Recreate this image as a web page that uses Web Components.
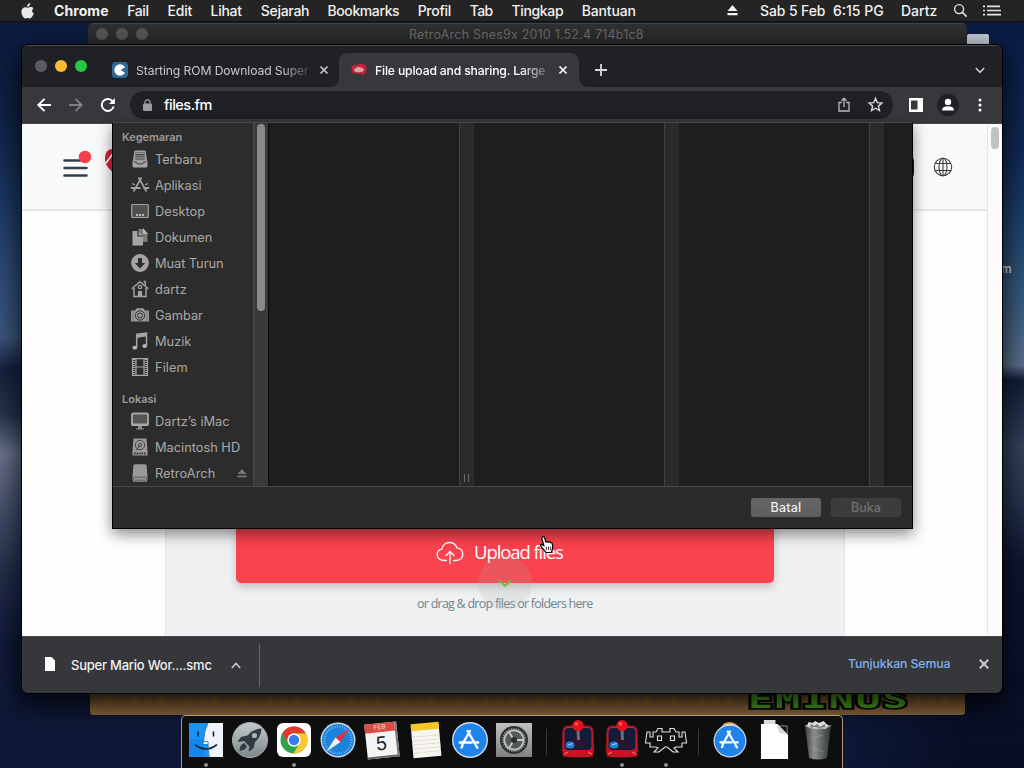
<!DOCTYPE html>
<html lang="ms">
<head>
<meta charset="utf-8">
<title>Desktop</title>
<style>
html,body{margin:0;width:1024px;height:768px;overflow:hidden;background:#0c1730;font-family:Inter,Roboto,sans-serif}
</style>
</head>
<body>
<mac-desktop></mac-desktop>
<script>
const define = (name, html, after) => customElements.define(name, class extends HTMLElement {
  connectedCallback() {
    if (this.shadowRoot) return;
    const root = this.attachShadow({ mode: 'open' });
    const t = document.createElement('template');
    t.innerHTML = typeof html === 'function' ? html(this) : html;
    root.appendChild(t.content.cloneNode(true));
    if (after) after(this, root);
  }
});

/* A single line of text, tracked so that it fills the width in its "w" attribute. */
define('fit-text', '<style>:host{display:inline-block;white-space:nowrap;flex:none}span{display:inline-block;white-space:pre}</style><span><slot></slot></span>', (el, root) => {
  const w = +el.getAttribute('w'), s = root.querySelector('span'), n = el.textContent.length;
  const nat = s.offsetWidth;
  el.style.width = w + 'px';
  if (nat) s.style.letterSpacing = ((w - nat) / n).toFixed(3) + 'px';
});

const appstoreA = '<path d="M17 8.500 9.700 21.200M14.800 8.500 21.500 20.200" stroke="#fff" stroke-width="2.300" stroke-linecap="round"/><path d="M7.300 19.300h11.300M22.500 19.300h2.200M9 24l.9-1.500M22.500 22l1.500 2.400" stroke="#fff" stroke-width="2.300" stroke-linecap="round"/>';
const joystick = '<path d="M1.500 10Q1.500 3.500 7 3.500h20q5.500 0 5.500 6.500l.8 19H.7z" fill="#a3141f"/><rect x="3" y="5.500" width="28" height="23" rx="4" fill="#161b3a" stroke="#c2263a"/><path d="m5 24 11-12 13 14H7z" fill="#2a1630"/><path d="M1 28h32l-1 6.500q-15 2-30 0z" fill="#c81420"/><path d="m3 32 4-2m24 2-4-2" stroke="#ff7a80"/><path d="m17 8 .5 10" stroke="#68707a" stroke-width="3"/><circle cx="17" cy="3.500" r="5.500" fill="#e8101c"/><circle cx="15.500" cy="2" r="1.800" fill="#ff5660"/><ellipse cx="9" cy="23" rx="4.400" ry="3.600" fill="#2a7fd0"/><path d="m7 23 4.500-1.500" stroke="#9fd0ff"/>';
const ICONS = {
  apple: ['0 0 14 16', '<path fill="#e8e8e8" d="M9.300 0c.1 1-.3 2-.9 2.700-.6.700-1.500 1.200-2.400 1.100C5.900 2.900 6.400 1.900 7 1.300 7.600.6 8.600.1 9.300 0zM12.400 5.400c-1.900 1.200-1.600 4 .5 4.900-.4 1.200-1 2.400-1.800 3.500-.6.800-1.300 1.600-2.200 1.600-.9 0-1.200-.5-2.300-.5s-1.400.5-2.200.5C3.400 15.500 2.600 14.600 2 13.800.2 11.200-.1 8.100 1 6.200c.8-1.300 2-2 3.200-2 1.200 0 1.900.6 2.900.6.900 0 1.500-.7 3-.7.900 0 1.700.5 2.300 1.300z"/>'],
  eject: ['0 0 12 11', '<path fill="currentColor" d="M6 0l5.500 6H.5zM.5 8h11v2.200H.5z"/>'],
  search: ['0 0 16 16', '<circle cx="6.500" cy="6.500" r="4.800" stroke="#e4e4e4" stroke-width="1.500"/><path d="m10 10 4.500 4.500" stroke="#e4e4e4" stroke-width="1.700"/>'],
  list: ['0 0 18 12', '<path d="M0 1.500h2M0 6h2M0 10.500h2M4 1.500h13M4 6h14M4 10.500h14" stroke="#e4e4e4" stroke-width="1.900"/>'],
  romtab: ['0 0 16 16', '<rect width="16" height="16" rx="4" fill="#2f6a96"/><circle cx="8" cy="8" r="5.700" fill="#fff"/><path d="m8.500 8 6-3.500v7z" fill="#2f6a96"/>'],
  filetab: ['0 0 16 16', '<path d="M.5 3 6 2l4-1.500 5 2q1.500 5-1 9l-2.500 3L10 12H2Q0 8 .5 3z" fill="#c92036"/><path d="M3 8q0-2 2-2.300Q7 3 9.500 5q3.500.5 3.500 3-1 2.500-4 2.500H6Q3.500 10.500 3 8z" fill="#d3a3a5"/>'],
  x: ['0 0 10 10', '<path d="m1.500 1.500 7 7m0-7-7 7" stroke="currentColor" stroke-width="1.700"/>'],
  plus: ['0 0 12 12', '<path d="M6 0v12M0 6h12" stroke="#d8dadc" stroke-width="1.800"/>'],
  down: ['0 0 10 7', '<path d="m.8 1 4.200 4.300L9.200 1" stroke="#c8cacc" stroke-width="1.600"/>'],
  up: ['0 0 10 7', '<path d="M.8 6 5 1.500 9.200 6" stroke="#c8cacc" stroke-width="1.600"/>'],
  back: ['0 0 14 14', '<path d="M7.500.8 1.300 7l6.200 6.200M1.300 7H14" stroke="#fff" stroke-width="1.900"/>'],
  fwd: ['0 0 14 14', '<path d="M6.500.8 12.700 7l-6.200 6.200M12.700 7H0" stroke="#7d7f83" stroke-width="1.800"/>'],
  reload: ['0 0 14 14', '<path d="M12.600 8.500A6 6 0 1 1 11 2.700L12.800 4.500" stroke="#fff" stroke-width="1.900"/><path d="M13.900 0v6H8z" fill="#fff"/>'],
  lock: ['0 0 9 12', '<rect y="4.500" width="9" height="7.500" rx="1.200" fill="#9a9ca0"/><path d="M2 5V3.300a2.500 2.500 0 0 1 5 0V5" stroke="#9a9ca0" stroke-width="1.200"/>'],
  share: ['0 0 12 15', '<path d="M3.800 5.500H1v8.500h10V5.500H8.200M6 10V1.500M3.500 3.700 6 1.200l2.500 2.500" stroke="#b8babd" stroke-width="1.300"/>'],
  star: ['0 0 14 14', '<path d="m7 1.300 1.700 4 4.300.4-3.300 2.800 1 4.200L7 10.500l-3.700 2.200 1-4.200L1 5.700l4.300-.4z" stroke="#d4d6d8" stroke-width="1.300"/>'],
  panel: ['0 0 14 14', '<path fill="#fff" fill-rule="evenodd" d="M0 0h14v14H0zM2 2.500v9h6.500v-9z"/>'],
  person: ['0 0 22 22', '<circle cx="11" cy="11" r="11" fill="#1f2023"/><circle cx="11" cy="8" r="3.200" fill="#fff"/><path fill="#fff" d="M5 16.500q0-4.300 6-4.300t6 4.300z"/>'],
  dots: ['0 0 4 14', '<circle cx="2" cy="2" r="1.500" fill="#fff"/><circle cx="2" cy="7" r="1.500" fill="#fff"/><circle cx="2" cy="12" r="1.500" fill="#fff"/>'],
  burger: ['0 0 28 28', '<path d="M1.500 10.500h22M1.500 18h22M1.500 25.500h22" stroke="#33414e" stroke-width="2.600" stroke-linecap="round"/><circle cx="22" cy="7" r="6.200" fill="#fb3c49"/>'],
  brand: ['0 0 24 26', '<path d="M12 26C4 21 0 16 0 9q0-9 8-9l16 1v20z" fill="#d61f38"/><path d="M1 14 7 6l4 9" stroke="#fff" stroke-width="1.700"/>'],
  globe: ['0 0 20 20', '<g stroke="#3b3c3e" stroke-width="1.100"><circle cx="10" cy="10" r="8.700"/><ellipse cx="10" cy="10" rx="4" ry="8.700"/><path d="M10 1v18M2.200 6.500h15.600M2.200 13.500h15.600"/></g>'],
  cloud: ['0 0 28 24', '<g stroke="#fff" stroke-width="1.300" stroke-linecap="round"><path d="M10.500 19.500H8.200C4 19.500 1.200 16.800 1.200 13.500c0-3 2.100-4.800 4.600-5.300C6.500 4 9.800 1.500 13.600 1.500c3.500 0 6.200 2 7.300 5.300 3.400.3 5.900 2.800 5.900 6.200 0 3.600-2.800 6.500-6.600 6.500h-2.700"/><path d="M14 22.500V10.500m-4 4 4-4 4 4"/></g>'],
  hand: ['0 0 16 18', '<path d="M3.300 1c1-.7 2 0 2.300.9l1.300 4.200 1-.7 1.400.8 1.400-.3 1 .9 1.300.2.800 2.800-.2 3.200-1.500 3.500H7L2.800 11.300l-1.300-2c.4-1.300 1.500-1.300 2.600 0l.8.3L2.900 3z" fill="#fff" stroke="#000" stroke-width="1.200"/><path d="M7.300 10.500v3.500m2.200-3.500V14m2.200-3.500V14" stroke="#000" stroke-width=".8"/>'],
  chev: ['0 0 16 10', '<path d="m1 1.500 7 6 7-6" stroke="#74b83c" stroke-width="2.200"/>'],
  file: ['0 0 10 14', '<path d="M0 0h6.500L10 3.500V14H0z" fill="#fff"/>'],
  terbaru: ['0 0 18 18', '<path fill="#a4a4a4" d="M3.500.5h11l1.500 10 .5 1v5l-1 1h-13l-1-1v-5l.5-1z"/><path d="M4.500 2.500h9v8h-9z" fill="#3a3a3a"/><path d="M4.500 3.500h9M4.500 5.700h9M4.500 7.900h9M4.500 10.100h9" stroke="#a4a4a4" stroke-width="1.100"/><path d="M2.500 12h3l1 2h5l1-2h3" stroke="#3a3a3a"/>'],
  aplikasi: ['0 0 18 18', '<g stroke="#a4a4a4" stroke-width="1.600"><path d="M10.500 1.500 2.500 15.500M7.500 1.500l8 14"/><path d="M0 12h9.500M12.500 12H18" stroke-width="1.800"/><path d="m1 7.500 3 1.500M17 7.500 14 9" stroke-width="1.300"/></g>'],
  desktop: ['0 0 18 18', '<rect x=".7" y="2.500" width="16.600" height="13" rx="1" fill="#505050" stroke="#a4a4a4" stroke-width="1.200"/><path d="M5 13h2m1 0h2m1 0h2" stroke="#ddd" stroke-width="1.600"/>'],
  dokumen: ['0 0 18 18', '<path d="M7.500 1H12l4.500 4.500V14h-9z" fill="#7b7b7b"/><path d="M12 0v6h5z" fill="#b5b5b5"/><path d="M1.500 3H7l5 5v9.500H1.500z" fill="#a4a4a4"/><path d="M7 3v5h5" stroke="#2c2c2c" stroke-width="1.200"/>'],
  turun: ['0 0 18 18', '<circle cx="9" cy="9" r="8.900" fill="#a4a4a4"/><path d="M7 4h4v5h3.200L9 14.500 3.800 9H7z" fill="#2c2c2c"/>'],
  rumah: ['0 0 18 18', '<path d="m.8 8.700 8.200-7 8.200 7M3 8v8.500h12V8M12.500 1.500h1.800V5" stroke="#a4a4a4" stroke-width="1.500"/><circle cx="9" cy="7" r="1.700" stroke="#a4a4a4" stroke-width="1.200"/><path d="M7 11h4v5.500H7z" fill="#a4a4a4"/>'],
  gambar: ['0 0 18 18', '<path fill="#9a9a9a" d="M0 4.500h4l1.500-2.300h7L14 4.500h4v11H0z"/><circle cx="9" cy="9.500" r="4.700" stroke="#303030"/><circle cx="9" cy="9.500" r="2.500" stroke="#303030"/><path d="M2 4v11M16 4v11" stroke="#777"/>'],
  muzik: ['0 0 18 18', '<path d="M5.700 15.500V2.500L15.500 1v12.500" stroke="#a4a4a4" stroke-width="1.500"/><path d="M5.500 2 16 .5v3.700L5.500 6z" fill="#a4a4a4"/><ellipse cx="3.800" cy="15.700" rx="2.400" ry="1.900" fill="#b4b4b4"/><ellipse cx="13.700" cy="14" rx="2.400" ry="1.900" fill="#b4b4b4"/>'],
  filem: ['0 0 18 18', '<path d="M1.500.7h15v16.600h-15zM5 1v16M13 1v16M5 9h8" stroke="#a4a4a4" stroke-width="1.200"/><path d="M3.200 1v16M14.800 1v16" stroke="#a4a4a4" stroke-width="2.600" stroke-dasharray="1 1"/>'],
  imac: ['0 0 18 18', '<rect x="1" y="1.500" width="16" height="11.500" rx="1" fill="#555" stroke="#a8a8a8" stroke-width="1.800"/><path d="M1 12.500h16" stroke="#a8a8a8" stroke-width="2"/><path d="M7 14h4v2.500h2v1H5v-1h2z" fill="#8a8a8a"/>'],
  hd: ['0 0 18 18', '<path d="M2.500.5h13l1 12v5h-15v-5z" fill="#9a9a9a"/><circle cx="9" cy="7" r="4.700" stroke="#404040" stroke-width=".9"/><circle cx="9" cy="7" r="1.700" stroke="#404040" stroke-width=".8"/><path d="m9 7-4 5.500" stroke="#404040"/><path d="M3 15.500h12" stroke="#303030" stroke-width="1.800" stroke-dasharray="1.500 1"/>'],
  drive: ['0 0 18 18', '<path d="M1.500 14 2.300 2Q2.500.3 4 .3h10q1.500 0 1.700 1.700l.8 12v1.700q0 2-2 2h-11q-2 0-2-2z" fill="#989898"/><path d="M2.500 14.200q0-1 1-1h11q1 0 1 1v1q0 1-1 1h-11q-1 0-1-1z" stroke="#555" stroke-width=".9"/>'],
  finder: ['0 0 34 34', '<path fill="#1b93f2" d="M0 0h34v34H0z"/><path fill="#0f7be0" d="M0 16h15v18H0z" opacity=".5"/><path fill="#eef3fa" d="M19 0h15v34H20q-1-6-1-13h-4.500Q15 8 19 0z"/><path d="M9 9v4M24.500 9v4M6.500 22q10.500 8 21 0" stroke="#14273e" stroke-width="1.600" stroke-linecap="round"/><path d="M19 0q-4 8-4.500 18.500H19Q19 28 20.500 34" stroke="#2b6aa8" stroke-width=".8"/>'],
  rocket: ['0 0 36 36', '<defs><linearGradient id="g" x2="0" y2="1"><stop stop-color="#c3c9cb"/><stop offset="1" stop-color="#7c8688"/></linearGradient></defs><circle cx="18" cy="18" r="17.500" fill="url(#g)" stroke="#a9afb1"/><path fill="#2f3b40" d="M29.500 6.500Q21 7 15.500 13.500L9 15q-2.500 3-3 5l6-1 5.500 5.500-1 5q3-1 5-3.500l1.500-6q6-5 6.500-13.500zM12 21q-4 1-4.500 8 6-1 7.500-4.500z"/><circle cx="22.500" cy="13.500" r="2.600" fill="#aab2b5"/>'],
  chrome: ['0 0 34 34', '<rect width="34" height="34" rx="6" fill="#fff"/><circle cx="17" cy="17" r="13.500" fill="#2ba24c"/><path fill="#fcc82d" d="M28.800 10.300A13.500 13.500 0 0 1 16.500 30.500L22.500 20 20 10.300z"/><path fill="#e2392c" d="M5.300 10.200A13.500 13.500 0 0 1 28.700 10.300H17L11 20.200z"/><circle cx="17" cy="17" r="6.700" fill="#fff"/><circle cx="17" cy="17" r="5.200" fill="#3d7cf0"/>'],
  safari: ['0 0 36 36', '<circle cx="18" cy="18" r="17.500" fill="#c9d5de"/><circle cx="18" cy="18" r="16" fill="#1b83dc"/><circle cx="18" cy="18" r="13.500" stroke="#8bc8f4" stroke-width="2.200" stroke-dasharray=".7 1.700"/><path fill="#ea2c3b" d="m29.500 6.500-14 9.500 4.500 4.500z"/><path fill="#f4f4f4" d="m6.500 29.500 14-9.500-5-4.500z"/>'],
  pages: ['0 0 34 36', '<g transform="rotate(-5 17 18)"><path fill="#f7f5ef" d="M3 3h28v32H3z"/><path fill="#f4c62c" d="M3 1h28v7H3z"/><path d="M3 14h28M3 18h28M3 22h28M3 26h28M3 30h28" stroke="#d8d5cc" stroke-width=".7"/></g>'],
  appstore: ['0 0 34 34', '<circle cx="17" cy="17" r="17" fill="#c8dcec"/><circle cx="17" cy="17" r="15.700" fill="#1f83ea"/>' + appstoreA],
  appstore2: ['0 0 34 34', '<circle cx="17" cy="12" r="12" fill="#e8e2d0"/><path d="M10 2q8-5 14 1" stroke="#e8933a" stroke-width="1.500"/><circle cx="17" cy="18" r="16.500" fill="#c8dcec"/><circle cx="17" cy="18" r="15.300" fill="#1f83ea"/>' + appstoreA],
  prefs: ['0 0 36 34', '<defs><linearGradient id="p" x2="0" y2="1"><stop stop-color="#bfc1c2"/><stop offset="1" stop-color="#7e8182"/></linearGradient></defs><path fill="url(#p)" d="M0 0h36v34H0z"/><circle cx="18" cy="17" r="13" fill="#9a9d9e" stroke="#333" stroke-width="2"/><circle cx="18" cy="17" r="12" stroke="#2e3031" stroke-width="2.500" stroke-dasharray="1.500 1.200"/><circle cx="18" cy="17" r="9.500" fill="#55585a" stroke="#c0c2c3" stroke-width="1.500"/><path d="M18 17h9M18 17l-5-8M18 17l-5 8" stroke="#c5c7c8" stroke-width="2"/><circle cx="18" cy="17" r="3" fill="#2a2c2d"/>'],
  joystick: ['0 0 34 36', joystick],
  retro: ['0 0 42 26', '<path d="M13 1.500h4v3.500h8V1.500h4l2 3.500h3v5h3V5h3l1.500 11H37v4h-6l-2 1 4 4h-5l-6-5h-2l-6 5H9l4-4-2-1H5v-4H.5L2 5h3v5h3V5h3z" fill="#101010" stroke="#e2e2e2" stroke-width="1.100"/><path d="M12.500 9h4v4.500h-4zM25.500 9h4v4.500h-4z" stroke="#e2e2e2" stroke-width="1.100"/>'],
  docs: ['0 0 30 40', '<path fill="#dcdcdc" d="M4 0h12v5H4z"/><path fill="#fff" d="M1 4h17l11 11v24H1z"/><path fill="#d8d8d8" d="M18 4q0 7 3 9l8 2z"/><path d="M18 6h10v9" stroke="#c9c9c9" stroke-width=".7"/>'],
  trash: ['0 0 32 40', '<defs><linearGradient id="t"><stop stop-color="#3a3d3e"/><stop offset=".35" stop-color="#8b8f90"/><stop offset="1" stop-color="#2f3233"/></linearGradient></defs><path fill="url(#t)" d="M2 5h28l-4.500 33Q16 41 6.500 38z"/><path fill="#ddd" d="m4 6 2-4 4 1 3-2 4 2 5-2 3 3 3 2-4 3-6-1-5 1-5-1z"/><path fill="#777" d="m8 4 4 2 3-2 3 3 5-3 1 3-6 1-6-1-4 1z"/><path d="M2 5.500q14 7 28 0" stroke="#aaa"/><path d="m8 18 14-3M9 27l13 5" stroke="#a8abac" opacity=".4"/>']
};
define('ui-icon', el => {
  const [box, body] = ICONS[el.getAttribute('name')];
  return `<style>:host{display:block;flex:none;width:${el.getAttribute('w')}px;height:${el.getAttribute('h') || el.getAttribute('w')}px}svg{display:block;width:100%;height:100%;overflow:visible}</style><svg viewBox="${box}" fill="none" preserveAspectRatio="none">${body}</svg>`;
});

define('menu-bar', () => `
<style>
:host{display:flex;align-items:center;height:22px;box-sizing:border-box;padding:0 23px 0 21px;background:#242425;border-bottom:1px solid #111;color:#f2f2f2;font-size:14px;font-weight:500;line-height:22px}
nav{display:flex;gap:18.700px;margin-left:19px}
b{font-weight:700}
.r{display:flex;align-items:center;margin-left:auto}
</style>
<ui-icon name="apple" w="14" h="16"></ui-icon>
<nav><fit-text w="54.500"><b>Chrome</b></fit-text>${[['Fail', 21.500], ['Edit', 24.500], ['Lihat', 31.500], ['Sejarah', 48], ['Bookmarks', 71.500], ['Profil', 33.500], ['Tab', 23], ['Tingkap', 51.500], ['Bantuan', 54]].map(([t, w]) => `<fit-text w="${w}">${t}</fit-text>`).join('')}</nav>
<div class="r"><ui-icon name="eject" w="11" h="11"></ui-icon>
<fit-text w="65" style="margin-left:22px">Sab 5 Feb</fit-text><fit-text w="51" style="margin-left:8px">6:15 PG</fit-text>
<fit-text w="36" style="margin-left:17px">Dartz</fit-text><ui-icon name="search" w="15" style="margin-left:16px"></ui-icon><ui-icon name="list" w="18" h="11" style="margin-left:15px"></ui-icon></div>`);

define('retro-window', `
<style>
:host{display:flex;flex-direction:column;border-radius:5px 5px 3px 3px;overflow:hidden}
header{display:flex;align-items:center;height:20px;padding-left:8px;gap:8px;color:#6b6b6b;font-size:12.500px;border-top:1px solid #444;background:linear-gradient(#303030,#292929)}
i{width:12px;height:12px;border-radius:50%;background:#565656}
.title{margin-left:253px}
.game{margin:auto 2px 0;height:24px;display:flex;border-radius:0 0 3px 3px;overflow:hidden;background:repeating-linear-gradient(90deg,#a87c0033 0 7px,transparent 7px 15px,#9b7a1d22 15px 21px,transparent 21px 27px) 14px 6px/100% 8px no-repeat,linear-gradient(#60472a,#86633a 60%,#8b693e)}
.word{margin:-1px 0 0 658px;height:20px;font:bold 24px/20px "DejaVu Sans Mono",monospace;color:#4fa51c;-webkit-text-stroke:3.500px #050805;paint-order:stroke fill;transform:scaleX(1.740);transform-origin:0 0}
</style>
<header><i></i><i></i><i></i><fit-text class="title" w="236">RetroArch Snes9x 2010 1.52.4 714b1c8</fit-text></header>
<div class="game"><fit-text class="word" w="93">EMINUS</fit-text></div>`);

define('tab-strip', `
<style>
:host{display:flex;height:41px;background:#202124;font-size:12.200px;align-items:flex-end}
.lights{display:flex;gap:8px;padding:0 0 15px 13px}
.lights i{width:12px;height:12px;border-radius:50%}
.tab{display:flex;align-items:center;height:34px;box-sizing:border-box;color:#c6c8ca}
.a{margin-left:25px;width:227px}
.b{background:#37383b;color:#fff;width:240px;border-radius:8px 8px 0 0;padding-left:12px;position:relative;font-weight:500}
.b:after{content:"";position:absolute;right:-8px;bottom:0;width:8px;height:8px;background:radial-gradient(circle at 100% 0,transparent 7.500px,#37383b 8px)}
.b:before{content:"";position:absolute;left:-8px;bottom:0;width:8px;height:8px;background:radial-gradient(circle at 0 0,transparent 7.500px,#37383b 8px)}
.clip{overflow:hidden;margin-left:8px;flex:none;-webkit-mask:linear-gradient(90deg,#000 85%,#0003)}
</style>
<div class="lights"><i style="background:#5c5b60"></i><i style="background:#fdbc2e"></i><i style="background:#28c840"></i></div>
<div class="tab a"><ui-icon name="romtab" w="16"></ui-icon><div class="clip" style="width:172px"><fit-text w="172">Starting ROM Download Super</fit-text></div><ui-icon name="x" w="10" style="margin-left:11px"></ui-icon></div>
<div class="tab b"><ui-icon name="filetab" w="16" h="14"></ui-icon><div class="clip" style="width:172px"><fit-text w="170">File upload and sharing. Large</fit-text></div><ui-icon name="x" w="10" style="margin-left:11px"></ui-icon></div>
<ui-icon name="plus" w="12" style="margin:0 0 11px 16px"></ui-icon>
<ui-icon name="down" w="10" h="7" style="margin:0 17px 13px auto"></ui-icon>`);

define('tool-bar', `
<style>
:host{display:flex;align-items:center;height:37px;background:#37383b;padding:0 20px 1px 15px;box-sizing:border-box;border-bottom:1px solid #46474a}
.omni{display:flex;align-items:center;flex:none;width:763px;height:28px;margin-left:15px;border-radius:14px;background:#202124;box-sizing:border-box;padding:0 10px 0 13px;color:#fff;font-size:14.500px;font-weight:500}
</style>
<ui-icon name="back" w="14"></ui-icon><ui-icon name="fwd" w="14" style="margin-left:18px"></ui-icon><ui-icon name="reload" w="14" style="margin-left:18px"></ui-icon>
<div class="omni"><ui-icon name="lock" w="9" h="12"></ui-icon><fit-text w="48" style="margin-left:12px">files.fm</fit-text><ui-icon name="share" w="12" h="15" style="margin-left:auto"></ui-icon><ui-icon name="star" w="15" style="margin-left:18px"></ui-icon></div>
<ui-icon name="panel" w="14" style="margin-left:16px"></ui-icon><ui-icon name="person" w="22" style="margin-left:14px"></ui-icon><ui-icon name="dots" w="4" h="14" style="margin-left:auto"></ui-icon>`);

define('web-page', `
<style>
:host{display:flex;height:512px;background:#fefefe;overflow:hidden}
.main{flex:1;display:flex;flex-direction:column}
header{display:flex;align-items:center;height:87px;box-sizing:border-box;background:#f8f9f9;border-bottom:2px solid #e6e7e8;padding:0 34px 0 41px}
.drop{width:680px;box-sizing:border-box;border:solid #e2e5e8;border-width:0 1px;margin-left:143px;flex:1;background:#eff0f2;display:flex;flex-direction:column;align-items:center}
.btn{width:538px;height:103px;margin-top:269px;background:#fb424f;border-radius:5px;box-shadow:0 4px 8px #0003;display:flex;align-items:flex-end;box-sizing:border-box;padding:0 0 18px 200px;color:#fff;font:18.500px/26px "Open Sans",sans-serif}
p{margin:11px 0 0 -1px;color:#71838c;font:12.500px/20px "Open Sans",sans-serif}
.bar{width:15px;box-sizing:border-box;border-left:1px solid #e5e5e5;background:#fbfbfb;padding:3px 0 0 3px}
.bar i{display:block;width:8px;height:22px;border-radius:4px;background:#c1c2c3}
.pill{margin-left:auto;width:14px;height:26px;border-radius:7px;background:#222}
</style>
<div class="main"><header><ui-icon name="burger" w="28" style="margin-top:-5px"></ui-icon><ui-icon name="brand" w="24" h="26" style="margin:-10px 0 0 14px"></ui-icon><div class="pill"></div><ui-icon name="globe" w="20" style="margin-left:19px"></ui-icon></header>
<div class="drop"><div class="btn"><ui-icon name="cloud" w="28" h="24"></ui-icon><fit-text w="89" style="margin-left:10px">Upload files</fit-text></div><p><fit-text w="175">or drag &amp; drop files or folders here</fit-text></p></div></div>
<div class="bar"><i></i></div>`);

define('download-bar', `
<style>
:host{display:flex;align-items:center;flex:1;background:#36373a;border-top:1px solid #48494c;color:#f0f0f0;font-size:13px;padding:0 12px 0 23px}
.item{display:flex;align-items:center;width:214px;height:43px;border-right:1px solid #66676a;font-weight:500}
.all{margin:-3px 0 0 auto;width:128px;height:27px;line-height:26px;box-sizing:border-box;display:flex;justify-content:center;color:#84aff0;border:1px solid #323338;border-radius:4px;font-size:12.300px;font-weight:500}
</style>
<div class="item"><ui-icon name="file" w="10" h="14" style="margin-top:-3px"></ui-icon><fit-text w="141" style="margin-left:16px">Super Mario Wor....smc</fit-text><ui-icon name="up" w="10" h="7" style="margin-left:19px"></ui-icon></div>
<div class="all"><fit-text w="102">Tunjukkan Semua</fit-text></div><ui-icon name="x" w="12" style="margin:-2px 0 0 15px;color:#c8cacc"></ui-icon>`);

define('chrome-window', `
<style>:host{display:flex;flex-direction:column;border-radius:6px;overflow:hidden;box-shadow:0 0 0 1px #000,0 10px 26px 4px #000b;border-top:1px solid #4a4b4d;box-sizing:border-box}</style>
<tab-strip></tab-strip><tool-bar></tool-bar><web-page></web-page><download-bar></download-bar>`);

define('side-item', el => `
<style>:host{display:flex;align-items:center;height:26px;padding-left:18px;color:#a9a9a9;font-size:12.800px}.e{margin-left:21px;color:#777}</style>
<ui-icon name="${el.getAttribute('icon')}" w="18"></ui-icon><fit-text w="${el.getAttribute('w')}" style="margin-left:6px">${el.getAttribute('label')}</fit-text>${el.hasAttribute('eject') ? '<ui-icon class="e" name="eject" w="10" h="9"></ui-icon>' : ''}`);

const item = (icon, label, w, extra = '') => `<side-item icon="${icon}" label="${label}" w="${w}" ${extra}></side-item>`;
define('open-dialog', `
<style>
:host{display:flex;flex-direction:column;box-sizing:border-box;border:1px solid #000;border-top:1px solid #484848;background:#2b2b2b;box-shadow:0 5px 14px #0007}
.body{display:flex;height:363px;border-bottom:1px solid #4a4a4a;background:#1e1e1e}
.side{width:140px;background:#2c2c2c;overflow:hidden;flex:none}
h4{margin:0;padding-left:9px;font-size:11px;line-height:14px;font-weight:600;color:#9b9b9b}
.scroll{width:15px;box-sizing:border-box;background:#3a3a3a;border-left:1px solid #4a4a4a;padding:1px 0 0 3px}
.scroll i{display:block;width:8px;height:187px;border-radius:4px;background:#8a8a8a}
.col{width:190px;box-sizing:border-box;background:#1e1e1e}
.col.first{width:191px;border-left:1px solid #0c0c0c}
.gap{width:15px;box-sizing:border-box;border-left:1px solid #424242;background:#2b2b2b;display:flex;align-items:flex-end;padding:0 0 4px 4px;gap:3px}
.gap s{width:1px;height:8px;background:#666}
footer{flex:1;display:flex;justify-content:flex-end;align-items:center;gap:10px;padding-right:11px}
button{all:unset;width:70px;height:19px;border-radius:3px;background:linear-gradient(#666,#5e5e5e);color:#eee;font:500 12.500px/19px Inter,sans-serif;display:flex;justify-content:center}
button:disabled{background:#3c3c3c;color:#707070}
</style>
<div class="body"><div class="side"><h4 style="margin-top:7px;margin-bottom:2px"><fit-text w="60.500">Kegemaran</fit-text></h4>
${item('terbaru', 'Terbaru', 46.500)}${item('aplikasi', 'Aplikasi', 46.500)}${item('desktop', 'Desktop', 50)}${item('dokumen', 'Dokumen', 57.500)}${item('turun', 'Muat Turun', 68.500)}${item('rumah', 'dartz', 31.500)}${item('gambar', 'Gambar', 48)}${item('muzik', 'Muzik', 36)}${item('filem', 'Filem', 32.500)}
<h4 style="margin:12px 0 2px"><fit-text w="34">Lokasi</fit-text></h4>
${item('imac', 'Dartz’s iMac', 75)}${item('hd', 'Macintosh HD', 85)}${item('drive', 'RetroArch', 60.500, 'eject')}</div>
<div class="scroll"><i></i></div><div class="col first"></div><div class="gap"><s></s><s></s></div><div class="col"></div><div class="gap"></div><div class="col"></div><div class="gap"></div></div>
<footer><button><fit-text w="31">Batal</fit-text></button><button disabled><fit-text w="30">Buka</fit-text></button></footer>`);

define('dock-cell', el => `
<style>:host{display:flex;width:44px;height:52px;flex-direction:column;align-items:center}.i{height:48px;display:flex;align-items:center}i{width:4px;height:4px;margin-top:-1px;border-radius:50%;background:${el.hasAttribute('on') ? '#8f9092' : 'transparent'}}</style><div class="i"><slot></slot></div><i></i>`);
define('cal-icon', `
<style>:host{display:flex;flex-direction:column;width:30px;height:33px;background:#f4f4f4;transform:rotate(-6deg);border-right:2px solid #777;border-bottom:2px solid #666;text-align:center;color:#222}
b{height:9px;background:#dc4b45;color:#f6c4bf;font:500 6.500px/9px Inter,sans-serif}span{font:19px/24px Inter,sans-serif}</style><b>FEB</b><span>5</span>`);

const cell = (n, w, h, on) => `<dock-cell ${on ? 'on' : ''}><ui-icon name="${n}" w="${w}" h="${h || w}"></ui-icon></dock-cell>`;
define('mac-dock', `
<style>:host{display:flex;box-sizing:border-box;padding:0 2px;background:#0e0e0f;border:1px solid #b29a78;border-bottom:0;border-radius:5px 5px 0 0}
hr{border:0;margin:13px 9px 0 10px;width:1px;flex:none;height:26px;background:#3c3c3c}dock-cell{flex:none}</style>
${cell('finder', 34, 34, 1)}${cell('rocket', 36)}${cell('chrome', 34, 34, 1)}${cell('safari', 36)}<dock-cell><cal-icon></cal-icon></dock-cell>${cell('pages', 34, 36)}${cell('appstore', 36)}${cell('prefs', 36, 34)}<hr>${cell('joystick', 34, 36)}${cell('joystick', 34, 36, 1)}${cell('retro', 42, 26, 1)}<hr>${cell('appstore2', 34)}${cell('docs', 29, 40)}${cell('trash', 30, 40)}`);

define('mac-desktop', `
<style>
:host{display:block;position:relative;width:1024px;height:768px;overflow:hidden;background:linear-gradient(#0b1a3c,#0e2145 14%,#1a3660 25%,#2c4a75 34%,#3d5780 44%,#16233f 48%,#28334f 54%,#6b7590 59%,#48526f 66%,#232d4a 75%,#101a38 84%,#0d1736)}
.w{position:absolute}
.rt{right:0;top:22px;width:182px;height:746px;background:linear-gradient(#0a1b42,#102a56 18%,#244a72 30%,#456585 41%,#5b6f8c 46%,#121d38 48%,#34425e 57%,#283450 64%,#0c1430 73%,#080e24);-webkit-mask:linear-gradient(90deg,transparent,#000 70%)}
.hdd{left:967px;top:34px;width:22px;height:12px;background:#bfcbd3;border-radius:2px 2px 0 0}
.lbl{left:1001px;top:261px;font:500 12px/15px Inter,sans-serif;color:#dfe5ee}
.halo{left:478px;top:556px;width:54px;height:54px;border-radius:50%;background:#a8b0a02e;display:flex;align-items:center;justify-content:center}
</style>
<div class="w rt"></div><div class="w hdd"></div><div class="w lbl">m</div>
<retro-window class="w" style="left:88px;top:23px;width:879px;height:692px"></retro-window>
<chrome-window class="w" style="left:22px;top:45px;width:980px;height:648px"></chrome-window>
<div class="w halo"><ui-icon name="chev" w="14" h="9"></ui-icon></div>
<open-dialog class="w" style="left:112px;top:122px;width:801px;height:407px"></open-dialog>
<ui-icon class="w" name="hand" w="16" h="18" style="left:539px;top:536px"></ui-icon>
<mac-dock class="w" style="left:181px;top:715px;width:662px;height:53px"></mac-dock>
<menu-bar class="w" style="left:0;top:0;width:1024px"></menu-bar>`);
</script>
</body>
</html>
